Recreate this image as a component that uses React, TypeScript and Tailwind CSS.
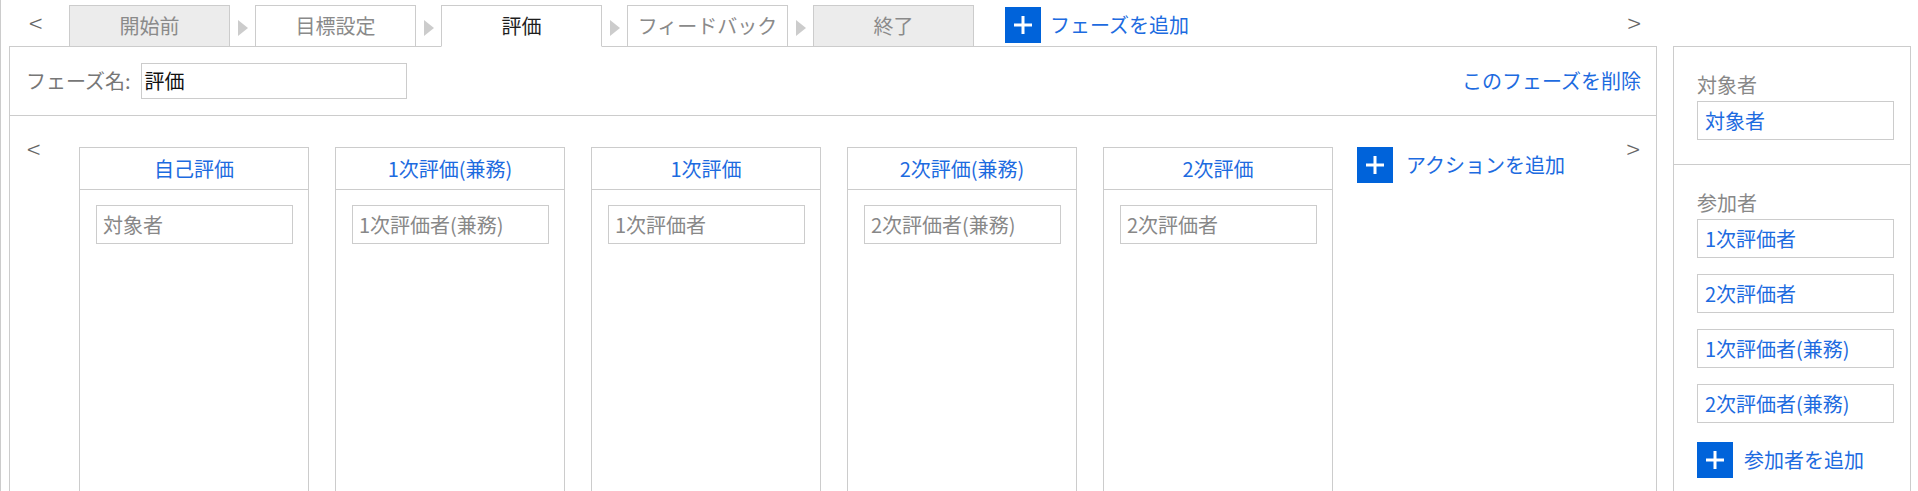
import React from "react";

function PlusBox() {
  return (
    <span className="flex h-[36px] w-[36px] shrink-0 items-center justify-center bg-[#0063da]">
      <svg width="20" height="20" viewBox="0 0 20 20">
        <path d="M10 1v18M1 10h18" stroke="white" strokeWidth="3" />
      </svg>
    </span>
  );
}

function TabArrow() {
  return (
    <div className="flex h-[42px] w-[25px] shrink-0 items-center justify-center pt-[3px]">
      <svg width="10" height="16" viewBox="0 0 10 16">
        <path d="M0 0L10 8L0 16Z" fill="#cccccc" />
      </svg>
    </div>
  );
}

type Variant = "grey" | "white" | "active";

function Tab({ label, variant }: { label: string; variant: Variant }) {
  const cls =
    variant === "grey"
      ? "bg-[#ececec] text-[#8a8a8a] border-b-[#cccccc]"
      : variant === "white"
      ? "bg-white text-[#8a8a8a] border-b-[#cccccc]"
      : "bg-white text-[#1e1e1e] border-b-white";
  return (
    <div
      className={
        "flex h-[42px] w-[161px] shrink-0 items-center justify-center border border-[#cccccc] text-[20px] leading-[26px] " +
        cls
      }
    >
      {label}
    </div>
  );
}

function Card({ title, value }: { title: string; value: string }) {
  return (
    <div className="h-[400px] w-[230px] shrink-0 border border-[#cccccc]">
      <div className="flex h-[42px] items-center justify-center border-b border-[#cccccc] text-[20px] leading-[26px] text-[#1d6be0]">
        {title}
      </div>
      <div className="px-[16px] pt-[15px]">
        <div className="flex h-[39px] w-[197px] items-center border border-[#cccccc] pl-[6px] text-[20px] leading-[26px] text-[#888888]">
          {value}
        </div>
      </div>
    </div>
  );
}

function SideInput({ value }: { value: string }) {
  return (
    <div className="flex h-[39px] w-[197px] items-center border border-[#cccccc] pl-[7px] text-[20px] leading-[26px] text-[#1d6be0]">
      {value}
    </div>
  );
}

export default function App() {
  const tabs: { label: string; variant: Variant }[] = [
    { label: "開始前", variant: "grey" },
    { label: "目標設定", variant: "white" },
    { label: "評価", variant: "active" },
    { label: "フィードバック", variant: "white" },
    { label: "終了", variant: "grey" },
  ];
  const cards = [
    { title: "自己評価", value: "対象者" },
    { title: "1次評価(兼務)", value: "1次評価者(兼務)" },
    { title: "1次評価", value: "1次評価者" },
    { title: "2次評価(兼務)", value: "2次評価者(兼務)" },
    { title: "2次評価", value: "2次評価者" },
  ];
  const participants = ["1次評価者", "2次評価者", "1次評価者(兼務)", "2次評価者(兼務)"];

  return (
    <div className="flex h-[491px] w-[1918px] overflow-hidden border-l border-[#cccccc] bg-white [font-family:'Noto_Sans_CJK_JP','Noto_Sans',sans-serif]">
      {/* left column */}
      <div className="ml-[8px] w-[1648px] shrink-0">
        {/* tab row */}
        <div className="relative z-10 flex h-[47px] items-end">
          <div className="flex h-[42px] w-[60px] shrink-0 items-center pb-[8px] pl-[20px] text-[25px] font-light leading-[28px] text-[#666666]">
            &lt;
          </div>
          {tabs.map((t, i) => (
            <React.Fragment key={t.label}>
              {i > 0 && <TabArrow />}
              <Tab label={t.label} variant={t.variant} />
            </React.Fragment>
          ))}
          <div className="mb-[4px] ml-[31px] flex items-center">
            <PlusBox />
            <span className="ml-[9px] text-[20px] leading-[26px] text-[#1d6be0]">フェーズを追加</span>
          </div>
          <div className="ml-auto flex h-[42px] items-center pb-[8px] pr-[16px] text-[25px] font-light leading-[28px] text-[#666666]">
            &gt;
          </div>
        </div>

        {/* main panel */}
        <div className="-mt-px h-[460px] border border-[#cccccc]">
          <div className="flex h-[69px] items-center justify-between border-b border-[#cccccc] pl-[16px] pr-[15px]">
            <div className="flex items-center">
              <span className="text-[20px] leading-[26px] text-[#777777]">フェーズ名:</span>
              <div className="ml-[10px] flex h-[36px] w-[266px] items-center border border-[#cccccc] pl-[3px] text-[20px] leading-[26px] text-[#111111]">
                評価
              </div>
            </div>
            <span className="text-[20px] leading-[26px] text-[#1d6be0]">このフェーズを削除</span>
          </div>

          <div className="flex pt-[31px]">
            <div className="-mt-[13px] w-[69px] shrink-0 pl-[17px] text-[25px] font-light leading-[28px] text-[#666666]">
              &lt;
            </div>
            <div className="flex gap-[26px]">
              {cards.map((c) => (
                <Card key={c.title} title={c.title} value={c.value} />
              ))}
            </div>
            <div className="ml-[24px] flex h-[36px] items-center">
              <PlusBox />
              <span className="ml-[13px] text-[20px] leading-[26px] text-[#1d6be0]">アクションを追加</span>
            </div>
            <div className="-mt-[13px] ml-auto pr-[16px] text-[25px] font-light leading-[28px] text-[#666666]">
              &gt;
            </div>
          </div>
        </div>
      </div>

      {/* right panel */}
      <div className="ml-[16px] mt-[46px] h-[460px] w-[238px] shrink-0 border border-[#cccccc]">
        <div className="border-b border-[#cccccc] pb-[24px] pl-[23px] pt-[22px]">
          <div className="text-[20px] leading-[32px] text-[#888888]">対象者</div>
          <SideInput value="対象者" />
        </div>
        <div className="pl-[23px] pt-[22px]">
          <div className="text-[20px] leading-[32px] text-[#888888]">参加者</div>
          <div className="flex flex-col gap-[16px]">
            {participants.map((p) => (
              <SideInput key={p} value={p} />
            ))}
          </div>
          <div className="mt-[19px] flex items-center">
            <PlusBox />
            <span className="ml-[11px] text-[20px] leading-[26px] text-[#1d6be0]">参加者を追加</span>
          </div>
        </div>
      </div>
    </div>
  );
}
